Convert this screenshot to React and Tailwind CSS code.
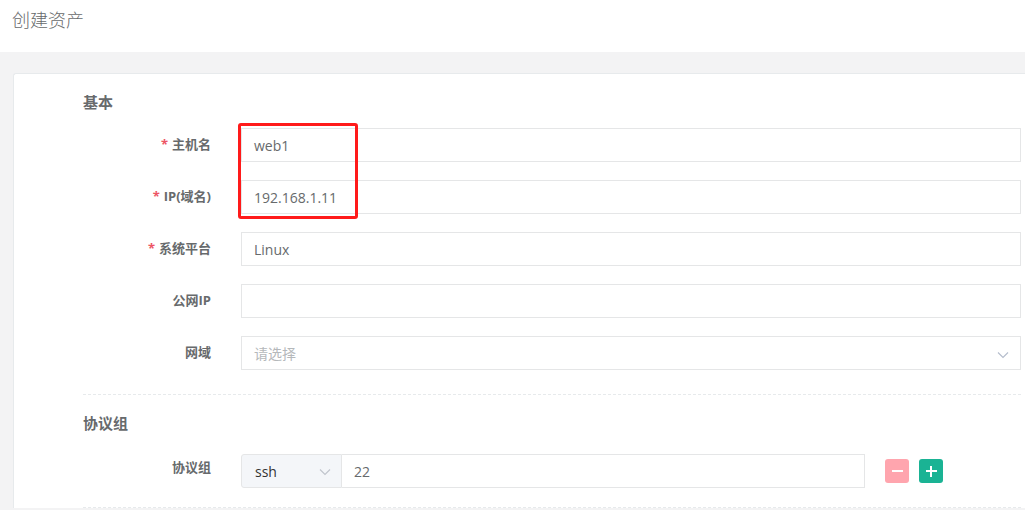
import React from "react";

const font = { fontFamily: '"Open Sans", "Noto Sans CJK SC", sans-serif' };

function Chevron({ className }) {
  return (
    <svg className={className} width="12" height="8" viewBox="0 0 12 8" fill="none">
      <path d="M1 1.5 L6 6.5 L11 1.5" stroke="currentColor" strokeWidth="1.1" />
    </svg>
  );
}

function Row({ label, required, children, className = "" }) {
  return (
    <div className={`flex items-center ${className}`}>
      <div className="w-[128px] shrink-0 text-right text-[13px] font-bold text-[#676a6c]">
        {required && <span className="mr-1 text-[#ed5565]">*</span>}
        {label}
      </div>
      <div className="ml-[30px] flex-1">{children}</div>
    </div>
  );
}

function Input({ value, placeholder, select }) {
  return (
    <div className="relative flex h-[34px] items-center border border-[#e5e6e7] bg-white px-3 text-[14px]">
      {value ? (
        <span className="text-[#676a6c]">{value}</span>
      ) : (
        <span className="text-[#b5b8bb]">{placeholder}</span>
      )}
      {select && <Chevron className="absolute right-[11px] top-[14px] text-[#b4bccc]" />}
    </div>
  );
}

export default function App() {
  return (
    <div className="w-[1025px] h-[510px] overflow-hidden bg-[#f3f3f4]" style={font}>
      <div className="flex h-[52px] items-center bg-white pl-[12px] pb-[12px] text-[18px] font-light text-[#676a6c]">
        创建资产
      </div>
      <div className="pl-[13px] pt-[21px]">
        <div className="relative rounded-tl-[3px] border-l border-t border-[#e7eaec] bg-white pl-[69px] pr-[4px] pt-[17px]">
          <div className="h-[22px] text-[15px] font-bold leading-[22px] text-[#676a6c]">基本</div>
          <div className="mt-[15px] flex flex-col gap-[18px]">
            <Row label="主机名" required>
              <Input value="web1" />
            </Row>
            <Row label="IP(域名)" required>
              <Input value="192.168.1.11" />
            </Row>
            <Row label="系统平台" required>
              <Input value="Linux" />
            </Row>
            <Row label="公网IP">
              <Input />
            </Row>
            <Row label="网域">
              <Input placeholder="请选择" select />
            </Row>
          </div>
          <div className="mt-[24px] border-t border-dashed border-[#e7eaec]" />
          <div className="mt-[17px] h-[22px] text-[15px] font-bold leading-[22px] text-[#676a6c]">协议组</div>
          <div className="mt-[20px] flex items-center">
            <div className="w-[128px] shrink-0 pb-[7px] text-right text-[13px] font-bold text-[#676a6c]">协议组</div>
            <div className="ml-[30px] flex items-center">
              <div className="relative flex h-[34px] w-[101px] items-center rounded-l-[3px] border border-[#e5e6e7] bg-[#f4f6f9] pl-[13px] text-[14px] text-[#333]">
                ssh
                <Chevron className="absolute right-[10px] top-[13px] text-[#c0c4cc]" />
              </div>
              <div className="flex h-[34px] w-[523px] items-center border border-l-0 border-[#e5e6e7] pl-[12px] text-[14px] text-[#676a6c]">
                22
              </div>
              <button className="ml-[20px] flex h-[24px] w-[24px] items-center justify-center rounded-[3px] bg-[#ffa5ae]">
                <span className="block h-[1.5px] w-[11px] bg-white" />
              </button>
              <button className="relative ml-[10px] flex h-[24px] w-[24px] items-center justify-center rounded-[3px] bg-[#1ab394]">
                <span className="block h-[1.5px] w-[11px] bg-white" />
                <span className="absolute left-[11.25px] top-[6.5px] block h-[11px] w-[1.5px] bg-white" />
              </button>
            </div>
          </div>
          <div className="mt-[19px] border-t border-dashed border-[#e7eaec]" />
          <div className="pointer-events-none absolute left-[224px] top-[49px] h-[96px] w-[120px] rounded-[3px] border-[3px] border-[#ff1a1a]" />
        </div>
      </div>
    </div>
  );
}
